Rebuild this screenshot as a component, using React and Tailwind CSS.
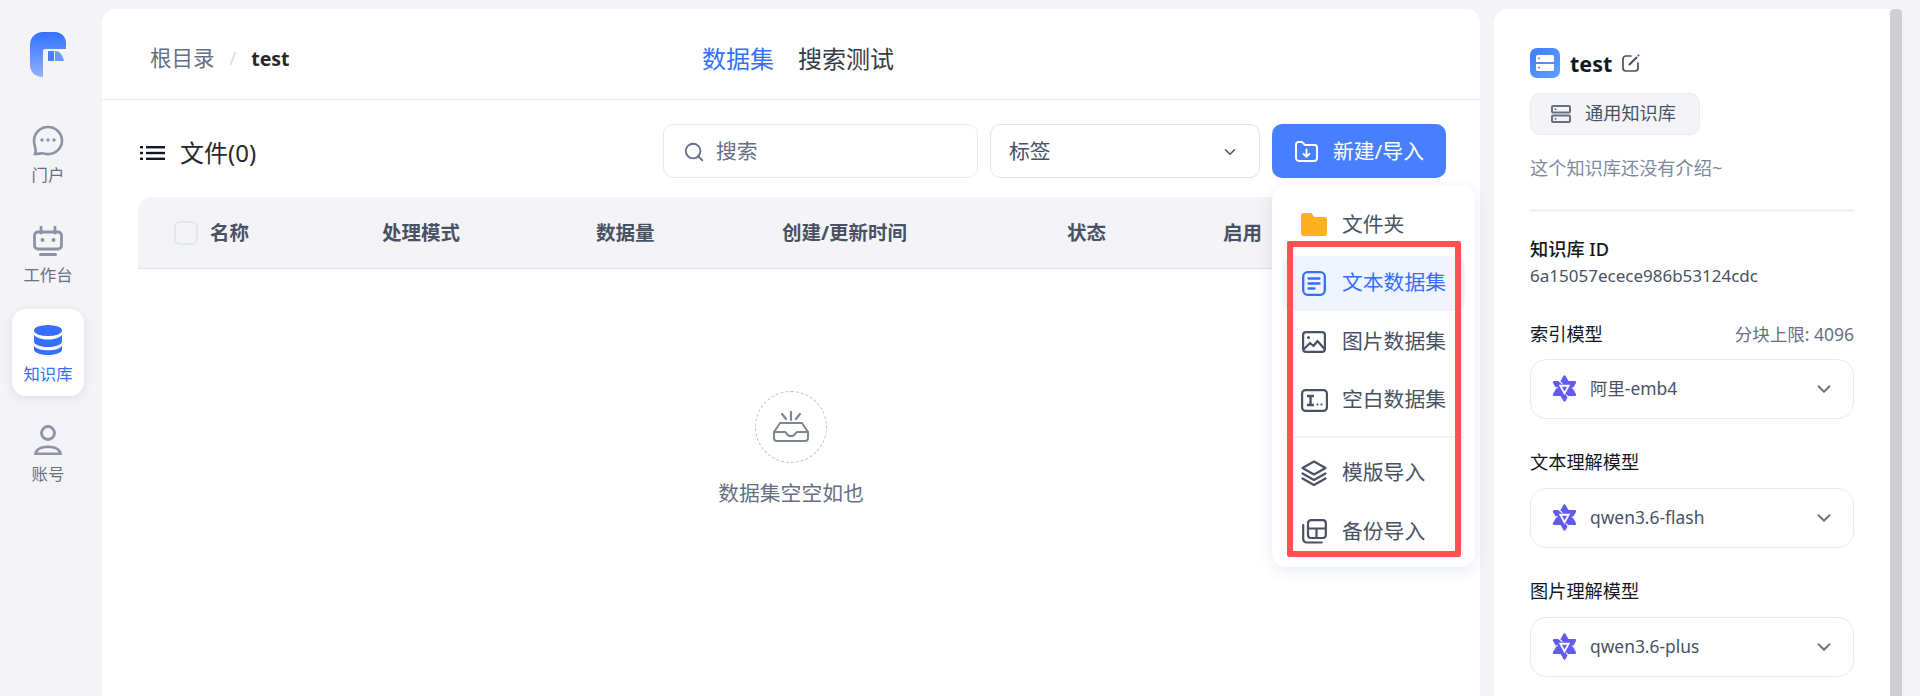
import { ChevronDown, Search } from 'lucide-react'

const font = { fontFamily: '"Noto Sans", "Noto Sans CJK SC", sans-serif' }

const Logo = () => (
  <svg width="36" height="46" viewBox="0 0 36 46">
    <defs>
      <linearGradient id="logoFill" x1="0" y1="0" x2="0" y2="1">
        <stop offset="0" stopColor="#3370ff" />
        <stop offset="1" stopColor="#8fb1ff" />
      </linearGradient>
    </defs>
    <path d="M13 0H25C31.5 0 36 5 36 11V17H15C14 17 13 18 13 19V45C5 45 0 40 0 33V13C0 5.500 5.500 0 13 0Z" fill="url(#logoFill)" />
    <path d="M18 19H24V29H18Z" fill="#4a80ff" />
    <path d="M25 19C30 19 33 24 34 29H25Z" fill="#6d97ff" />
  </svg>
)

const ChatIcon = () => (
  <svg width="32" height="32" viewBox="0 0 32 32" fill="none">
    <path d="M16 2C8.300 2 2 8.200 2 15.800c0 3 .9 5.500 1.600 8.600.3 1.600-.3 3.600-.6 4.600 2.600.2 6.800-1 8.200-.6 1.400.5 3 .7 4.800.7 7.700 0 14-6.200 14-13.300C30 8.200 23.700 2 16 2Z" stroke="#8a94a6" strokeWidth="2.600" />
    <circle cx="10" cy="15" r="1.700" fill="#8a94a6" />
    <circle cx="16" cy="15" r="1.700" fill="#8a94a6" />
    <circle cx="22" cy="15" r="1.700" fill="#8a94a6" />
  </svg>
)

const BotIcon = () => (
  <svg width="30" height="30" viewBox="0 0 30 30" fill="none">
    <path d="M8 1v6M22 1v6" stroke="#8a94a6" strokeWidth="2.800" strokeLinecap="round" />
    <rect x="1.500" y="6" width="27" height="17" rx="3.500" stroke="#8a94a6" strokeWidth="2.800" />
    <circle cx="9.500" cy="14" r="2" fill="#8a94a6" />
    <circle cx="20.500" cy="14" r="2" fill="#8a94a6" />
    <rect x="6" y="27" width="18" height="3" rx="1.500" fill="#8a94a6" />
  </svg>
)

const DbIcon = () => (
  <svg width="28" height="30" viewBox="0 0 28 30" fill="#3370ff">
    <ellipse cx="14" cy="5.500" rx="14" ry="5.500" />
    <path d="M0 9.500C1.500 13 8 14.500 14 14.500S26.500 13 28 9.500V17c-1 3.500-8 5-14 5S1 20.500 0 17Z" />
    <path d="M0 20.500C1.500 24 8 25.300 14 25.300S26.500 24 28 20.500V25c-1 3.300-8 5-14 5S1 28.300 0 25Z" />
  </svg>
)

const UserIcon = () => (
  <svg width="28" height="30" viewBox="0 0 28 30" fill="none">
    <circle cx="14" cy="8" r="6.500" stroke="#8a94a6" strokeWidth="2.800" />
    <path d="M0 30c0-5.500 5-9.500 14-9.500S28 24.500 28 30Z" fill="#8a94a6" />
    <path d="M3.500 27.500c1-3 5-4.300 10.500-4.300s9.500 1.300 10.500 4.300Z" fill="#f4f4f7" />
  </svg>
)

const ListIcon = () => (
  <svg width="25" height="14" viewBox="0 0 25 14" fill="#111824">
    <rect x="0" y="0" width="3" height="2.400" />
    <rect x="6" y="0" width="19" height="2.400" />
    <rect x="0" y="5.800" width="3" height="2.400" />
    <rect x="6" y="5.800" width="19" height="2.400" />
    <rect x="0" y="11.600" width="3" height="2.400" />
    <rect x="6" y="11.600" width="19" height="2.400" />
  </svg>
)

const ImportIcon = () => (
  <svg width="23" height="21" viewBox="0 0 23 21" fill="none" stroke="#fff" strokeWidth="1.900" strokeLinecap="round" strokeLinejoin="round">
    <path d="M1 17V3.500A2.500 2.500 0 0 1 3.500 1H7l3 3h9.500A2.500 2.500 0 0 1 22 6.500V17a3 3 0 0 1-3 3H4a3 3 0 0 1-3-3Z" />
    <path d="M11.500 8.500v7M8.500 12.800l3 3 3-3" />
  </svg>
)

const EmptyBox = () => (
  <svg width="38" height="32" viewBox="0 0 38 32" fill="none" stroke="#7d868f" strokeWidth="2" strokeLinecap="round" strokeLinejoin="round">
    <path d="M19 1v8M10 3l4 5M28 3l-4 5" strokeWidth="2.200" />
    <path d="M8 12h22l6 9v6a3 3 0 0 1-3 3H5a3 3 0 0 1-3-3v-6Z" />
    <path d="M2 21h10.500c1 0 1.500.5 2 1.500.7 1.500 2 2.500 4.500 2.500s3.800-1 4.500-2.500c.5-1 1-1.500 2-1.500H36" />
  </svg>
)

const FolderIcon = () => (
  <svg width="26" height="23" viewBox="0 0 26 23" fill="#ffb020">
    <path d="M0 2.500A2.500 2.500 0 0 1 2.500 0H9c1 0 1.500.4 2 1l2.500 3h10A2.500 2.500 0 0 1 26 6.500v14a2.500 2.500 0 0 1-2.500 2.500h-21A2.500 2.500 0 0 1 0 20.500Z" />
  </svg>
)

const TextDocIcon = () => (
  <svg width="24" height="25" viewBox="0 0 24 25" fill="none" stroke="#3370ff" strokeWidth="2.300" strokeLinecap="round">
    <rect x="1.200" y="1.200" width="21.600" height="22.600" rx="4.500" />
    <path d="M6.500 7.500h11M6.500 12.500h11M6.500 17.500h6" />
  </svg>
)

const ImageIcon = () => (
  <svg width="24" height="22" viewBox="0 0 24 22" fill="none" stroke="#485264" strokeWidth="2.200" strokeLinejoin="round">
    <rect x="1.100" y="1.100" width="21.800" height="19.800" rx="3" />
    <path d="M1.500 18.500l6.500-6.500 3.500 3 4-5 7 8" />
    <circle cx="6.500" cy="6.500" r="1.500" fill="#485264" stroke="none" />
  </svg>
)

const BlankIcon = () => (
  <svg width="27" height="23" viewBox="0 0 27 23" fill="none" stroke="#485264" strokeWidth="2.200">
    <rect x="1.100" y="1.100" width="24.800" height="20.800" rx="3.500" />
    <path d="M6 7h7M6 16h7M9.500 7v9" strokeWidth="2.400" />
    <circle cx="16.500" cy="15.500" r="1.100" fill="#485264" stroke="none" />
    <circle cx="20.500" cy="15.500" r="1.100" fill="#485264" stroke="none" />
  </svg>
)

const LayersIcon = () => (
  <svg width="26" height="26" viewBox="0 0 26 26" fill="none" stroke="#485264" strokeWidth="2.200" strokeLinejoin="round" strokeLinecap="round">
    <path d="M13 1.500L24.500 8 13 14.500 1.500 8Z" />
    <path d="M1.500 13.500L13 20l11.500-6.500" />
    <path d="M1.500 18.500L13 25l11.500-6.500" />
  </svg>
)

const BackupIcon = () => (
  <svg width="25" height="25" viewBox="0 0 25 25" fill="none" stroke="#485264" strokeWidth="2.200" strokeLinejoin="round" strokeLinecap="round">
    <path d="M1.200 6v14a3.500 3.500 0 0 0 3.500 3.500h15" />
    <rect x="6" y="1.200" width="17.800" height="17.800" rx="3" />
    <path d="M6 9.500h17.800M14.500 9.500V19" />
  </svg>
)

const KbIcon = () => (
  <div className="flex h-[30px] w-[30px] items-center justify-center rounded-[7px] bg-gradient-to-br from-[#3f7dff] to-[#5fa0ff]">
    <svg width="18" height="16" viewBox="0 0 18 16" fill="#fff">
      <path d="M1.500 0h15A1.500 1.500 0 0 1 18 1.500V7H0V1.500A1.500 1.500 0 0 1 1.500 0ZM0 9h18v5.500a1.500 1.500 0 0 1-1.500 1.500h-15A1.500 1.500 0 0 1 0 14.500Z" />
      <circle cx="3" cy="3.500" r="1" fill="#4a87ff" />
      <circle cx="3" cy="12.500" r="1" fill="#4a87ff" />
    </svg>
  </div>
)

const EditIcon = () => (
  <svg width="18" height="18" viewBox="0 0 18 18" fill="none" stroke="#485264" strokeWidth="1.700" strokeLinecap="round" strokeLinejoin="round">
    <path d="M9 2H4a3 3 0 0 0-3 3v9a3 3 0 0 0 3 3h9a3 3 0 0 0 3-3V9" />
    <path d="M7.500 10.500L14.500 3.500" strokeWidth="2" />
    <circle cx="16.500" cy="1.500" r="1" fill="#485264" stroke="none" />
  </svg>
)

const TypeIcon = () => (
  <svg width="20" height="18" viewBox="0 0 20 18" fill="none" stroke="#667085" strokeWidth="2">
    <rect x="1" y="1" width="18" height="6.500" rx="1" />
    <rect x="1" y="10.500" width="18" height="6.500" rx="1" />
    <circle cx="4.500" cy="4.200" r="1" fill="#667085" stroke="none" />
    <circle cx="4.500" cy="13.800" r="1" fill="#667085" stroke="none" />
  </svg>
)

const QwenIcon = () => (
  <svg width="27" height="27" viewBox="1 0 24 26" fill="#615ced" stroke="#615ced" strokeWidth="2.400" strokeLinejoin="round">
    <path d="M13 1.500L23 19H3Z" />
    <path d="M13 24.500L3 7H23Z" />
    <path d="M7.500 9.500h11L13 19.500Z" fill="#fff" stroke="none" />
    <path d="M10.500 11.300h5L13 16Z" stroke="none" />
    <path d="M7.500 5.500l3.500 3M1.500 13.500l5-1.500M24.500 13l-4.500-.5M17 22l-2.500-3" stroke="#fff" strokeWidth="1.100" fill="none" />
  </svg>
)

function NavItem({ icon, label, active }) {
  return (
    <div className={`flex h-[87px] w-[72px] flex-col items-center rounded-[14px] pt-[15px] ${active ? 'bg-white shadow-[0_2px_8px_rgba(19,51,107,0.1)]' : ''}`}>
      <div className="flex h-[32px] items-center justify-center">{icon}</div>
      <div className={`mt-[7px] text-[16.4px] leading-[22px] ${active ? 'text-[#3370ff]' : 'text-[#667085]'}`}>{label}</div>
    </div>
  )
}

function MenuItem({ icon, label, active }) {
  return (
    <div className={`flex h-[55px] items-center rounded-[10px] ${active ? 'bg-[#f0f4ff] text-[#3370ff]' : 'text-[#485264]'}`}>
      <div className="flex w-[60px] justify-center pl-[4px]">{icon}</div>
      <span className="whitespace-nowrap text-[20.8px]">{label}</span>
    </div>
  )
}

function ModelSelect({ label }) {
  return (
    <div className="flex h-[60px] items-center rounded-[16px] border border-[#e8ebf0] pl-[20px] pr-[18px] text-[#485264]">
      <QwenIcon />
      <span className="ml-[12px] flex-1 text-[17.4px]">{label}</span>
      <ChevronDown size={22} strokeWidth={2} className="text-[#667085]" />
    </div>
  )
}

const columns = [
  { label: '名称', width: 'w-[244px] pl-[36px]' },
  { label: '处理模式', width: 'w-[214px]' },
  { label: '数据量', width: 'w-[186px]' },
  { label: '创建/更新时间', width: 'w-[285px]' },
  { label: '状态', width: 'w-[156px]' },
  { label: '启用', width: 'w-[100px]' },
]

export default function App() {
  return (
    <div className="flex h-[696px] w-[1920px] overflow-hidden bg-[#f4f4f7]" style={font}>
      {/* sidebar */}
      <aside className="flex w-[102px] shrink-0 flex-col items-center pr-[6px] pt-[32px]">
        <div className="mb-[32px]"><Logo /></div>
        <div className="flex flex-col gap-[12.500px]">
          <NavItem icon={<ChatIcon />} label="门户" />
          <NavItem icon={<BotIcon />} label="工作台" />
          <NavItem icon={<DbIcon />} label="知识库" active />
          <NavItem icon={<UserIcon />} label="账号" />
        </div>
      </aside>

      {/* main */}
      <main className="mt-[9px] flex w-[1378px] shrink-0 flex-col rounded-t-[14px] bg-white">
        <div className="relative flex h-[91px] items-center border-b border-[#e8ebf0] pl-[48px] pt-[9px]">
          <span className="text-[21.5px] text-[#667085]">根目录</span>
          <span className="mx-[15px] text-[18px] text-[#d8dce4]">/</span>
          <span className="text-[19.5px] font-bold text-[#24282c]">test</span>
          <div className="absolute left-[600px] flex gap-[24px] text-[24px]">
            <span className="text-[#3370ff]">数据集</span>
            <span className="text-[#363c44]">搜索测试</span>
          </div>
        </div>

        <div className="flex h-[97px] items-center pl-[38px] pr-[34px] pt-[8px]">
          <ListIcon />
          <span className="ml-[15px] flex-1 text-[24px] text-[#24282c]">文件(0)</span>
          <div className="-mt-[4px] flex h-[54px] w-[315px] items-center rounded-[10px] border border-[#e8ebf0] pl-[19px] pt-[2px] text-[#667085]">
            <Search size={22} strokeWidth={2} />
            <span className="ml-[11px] text-[20.8px]">搜索</span>
          </div>
          <div className="-mt-[4px] ml-[12px] flex h-[54px] w-[270px] items-center justify-between rounded-[10px] border border-[#e2e4ec] pl-[18px] pr-[20px] pt-[2px] text-[#485264]">
            <span className="text-[20.8px]">标签</span>
            <ChevronDown size={18} strokeWidth={2} />
          </div>
          <div className="relative -mt-[4px] ml-[12px]">
            <button className="flex h-[54px] w-[174px] items-center rounded-[10px] bg-[#487fff] pl-[23px] pt-[2px] text-white">
              <ImportIcon />
              <span className="ml-[15px] whitespace-nowrap text-[20.8px]">新建/导入</span>
            </button>
            <div className="absolute left-0 top-[62px] z-10 w-[203px] rounded-[14px] bg-white px-[10px] pb-[8px] pt-[11.500px] shadow-[0_4px_16px_rgba(19,51,107,0.1)]">
              <div className="flex flex-col gap-[3.500px]">
                <MenuItem icon={<FolderIcon />} label="文件夹" />
                <MenuItem icon={<TextDocIcon />} label="文本数据集" active />
                <MenuItem icon={<ImageIcon />} label="图片数据集" />
                <MenuItem icon={<BlankIcon />} label="空白数据集" />
              </div>
              <div className="my-[8px] h-[2px] bg-[#f2f3f7]" />
              <div className="flex flex-col gap-[3.500px]">
                <MenuItem icon={<LayersIcon />} label="模版导入" />
                <MenuItem icon={<BackupIcon />} label="备份导入" />
              </div>
              {/* red annotation box */}
              <div className="absolute left-[15px] top-[55px] h-[316px] w-[174px] rounded-[2px] border-[6px] border-[#ff5252]" />
            </div>
          </div>
        </div>

        <div className="ml-[36px] mr-[33px] flex h-[72px] items-center rounded-t-[14px] border-b border-[#e2e4ec] bg-[#f4f4f7] text-[19.5px] font-bold text-[#485264]">
          {columns.map((c, i) => (
            <div key={c.label} className={`flex items-center whitespace-nowrap ${c.width}`}>
              {i === 0 && <span className="mr-[12px] h-[24px] w-[24px] shrink-0 rounded-[6px] border-2 border-[#e2e8f0]" />}
              {c.label}
            </div>
          ))}
        </div>

        <div className="flex flex-col items-center pt-[122px]">
          <div className="flex h-[72px] w-[72px] items-center justify-center rounded-full border border-dashed border-[#bdbdbd]">
            <EmptyBox />
          </div>
          <div className="mt-[15px] text-[20.8px] leading-[30px] text-[#667085]">数据集空空如也</div>
        </div>
      </main>

      {/* detail panel */}
      <section className="ml-[14px] mt-[9px] flex w-[408px] shrink-0 rounded-t-[14px] bg-white">
        <div className="flex w-[396px] flex-col px-[36px] pt-[39px]">
          <div className="flex h-[30px] items-center">
            <KbIcon />
            <span className="ml-[10px] translate-y-[1px] text-[21.5px] font-bold text-[#111824]">test</span>
            <span className="ml-[10px]"><EditIcon /></span>
          </div>
          <div className="mt-[15px] flex h-[42px] w-[170px] items-center rounded-[10px] border border-[#e8ebf0] bg-[#f4f4f7] pl-[20px] text-[#485264]">
            <TypeIcon />
            <span className="ml-[14px] whitespace-nowrap text-[18.2px]">通用知识库</span>
          </div>
          <div className="mt-[18px] text-[18.2px] leading-[30px] text-[#808a9c]">这个知识库还没有介绍~</div>
          <div className="mb-[24px] mt-[26px] h-[3px] bg-[#f2f3f7]" />
          <div className="text-[18.2px] font-medium leading-[26px] text-[#111824]">知识库 ID</div>
          <div className="mt-[1px] text-[17px] leading-[26px] text-[#485264]">6a15057ecece986b53124cdc</div>
          <div className="mb-[11px] mt-[30.500px] flex items-center justify-between leading-[28px]">
            <span className="text-[18.2px] text-[#111824]">索引模型</span>
            <span className="text-[17.5px] text-[#667085]">分块上限: 4096</span>
          </div>
          <ModelSelect label="阿里-emb4" />
          <div className="mb-[12px] mt-[29px] text-[18.2px] leading-[28px] text-[#111824]">文本理解模型</div>
          <ModelSelect label="qwen3.6-flash" />
          <div className="mb-[12px] mt-[29px] text-[18.2px] leading-[28px] text-[#111824]">图片理解模型</div>
          <ModelSelect label="qwen3.6-plus" />
        </div>
        <div className="w-[12px] rounded-t-[4px] bg-[#cfd0d4]" />
      </section>
    </div>
  )
}
